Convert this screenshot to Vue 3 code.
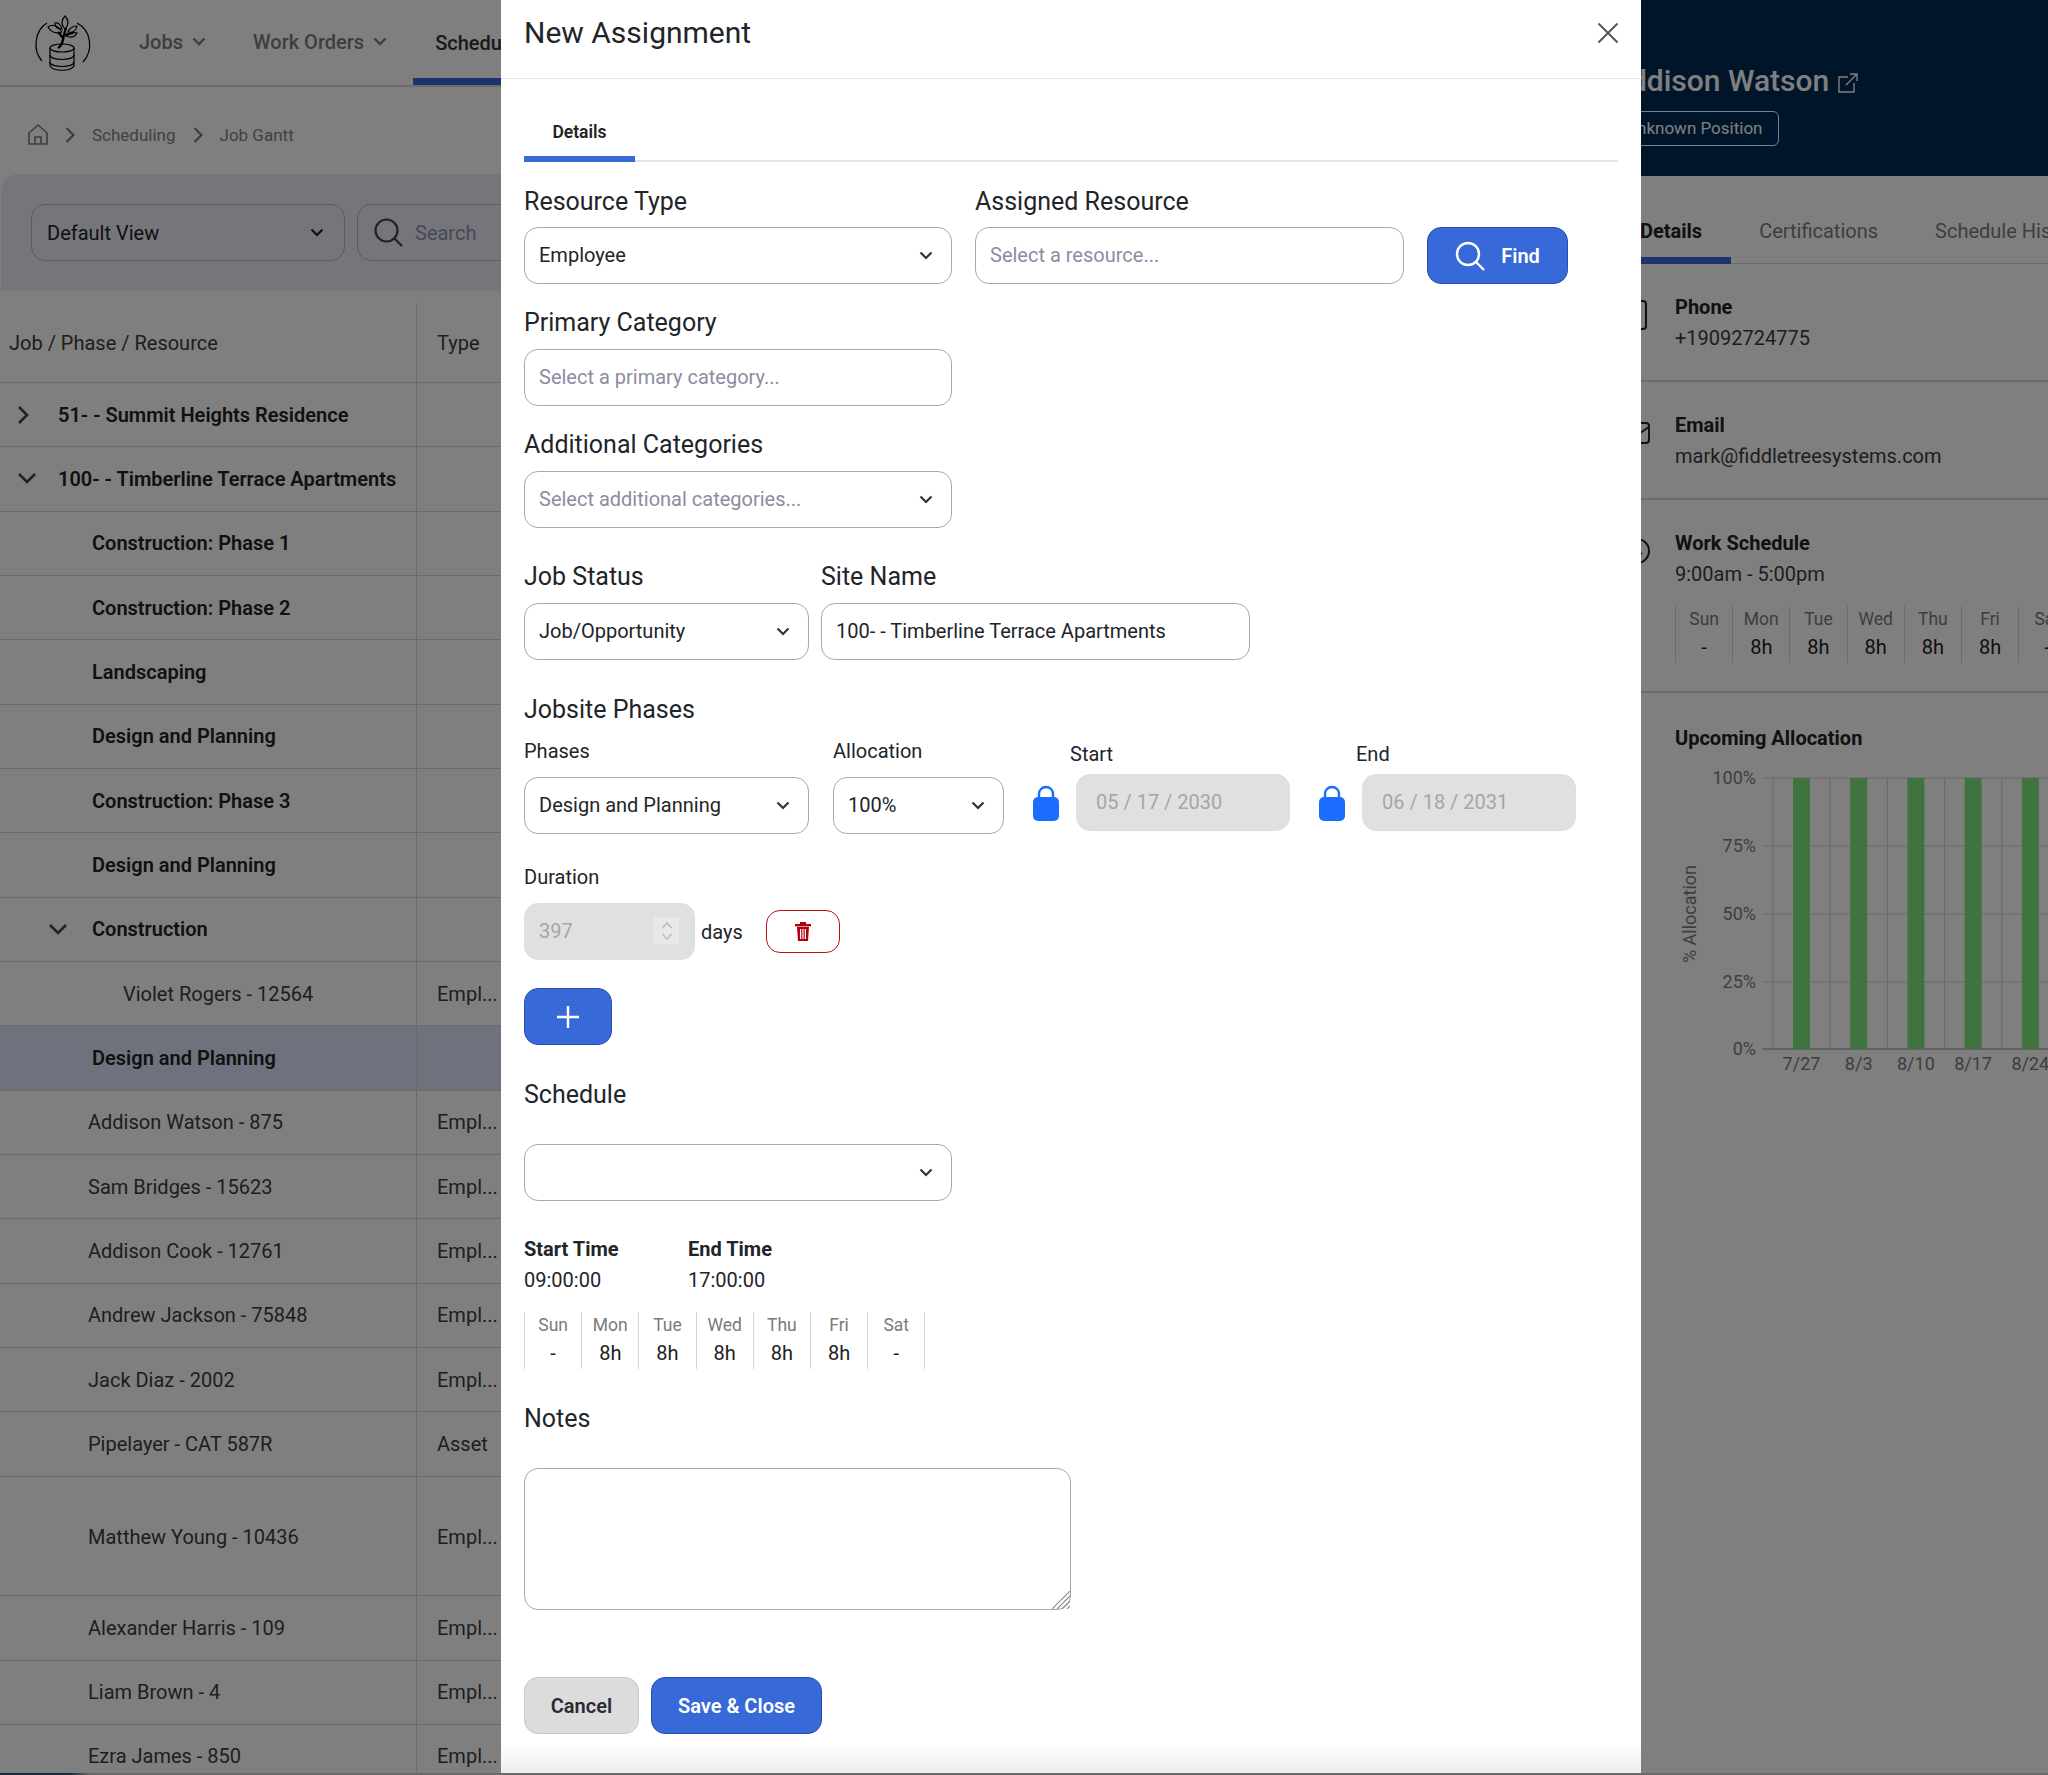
<script setup>
const rows = [
    { name: "51- - Summit Heights Residence", level: "top", chevron: "right" },
    { name: "100- - Timberline Terrace Apartments", level: "top", chevron: "down" },
    { name: "Construction: Phase 1", level: "phase" },
    { name: "Construction: Phase 2", level: "phase" },
    { name: "Landscaping", level: "phase" },
    { name: "Design and Planning", level: "phase" },
    { name: "Construction: Phase 3", level: "phase" },
    { name: "Design and Planning", level: "phase" },
    { name: "Construction", level: "phase", chevron: "sub" },
    { name: "Violet Rogers - 12564", level: "nested", type: "Empl..." },
    { name: "Design and Planning", level: "phase", selected: true },
    { name: "Addison Watson - 875", level: "person", type: "Empl..." },
    { name: "Sam Bridges - 15623", level: "person", type: "Empl..." },
    { name: "Addison Cook - 12761", level: "person", type: "Empl..." },
    { name: "Andrew Jackson - 75848", level: "person", type: "Empl..." },
    { name: "Jack Diaz - 2002", level: "person", type: "Empl..." },
    { name: "Pipelayer - CAT 587R", level: "person", type: "Asset" },
    { name: "Matthew Young - 10436", level: "person", type: "Empl...", tall: true },
    { name: "Alexander Harris - 109", level: "person", type: "Empl..." },
    { name: "Liam Brown - 4", level: "person", type: "Empl..." },
    { name: "Ezra James - 850", level: "person", type: "Empl..." },
];

const days = [
    { day: "Sun", hours: "-" },
    { day: "Mon", hours: "8h" },
    { day: "Tue", hours: "8h" },
    { day: "Wed", hours: "8h" },
    { day: "Thu", hours: "8h" },
    { day: "Fri", hours: "8h" },
    { day: "Sat", hours: "-" },
];

const yTicks = [
    { label: "100%", y: 18 },
    { label: "75%", y: 86 },
    { label: "50%", y: 154 },
    { label: "25%", y: 222 },
    { label: "0%", y: 289 },
];
const xTicks = ["7/27", "8/3", "8/10", "8/17", "8/24"];
</script>

<template>
    <div class="page">
        <div class="left">
            <nav class="nav">
                <svg class="logo" width="60" height="60" viewBox="8 5 60 60" fill="none" stroke="#000" stroke-width="1.2">
                    <path d="M22 15C10 22 7 42 17 53" />
                    <path d="M52 15C66 22 69 42 58 54" />
                    <ellipse cx="37" cy="40" rx="12" ry="4" />
                    <path d="M25 40V57C25 64 49 64 49 57V40" />
                    <path d="M25 47C25 53 49 53 49 47" />
                    <path d="M25 54C25 60 49 60 49 54" />
                    <path d="M33 40C37 38 38 33 39 27L41 20M38 30L33 24M40 27L48 25" stroke-width="2.2" />
                    <path d="M40 8C36 12 36 17 40 21C44 17 44 12 40 8Z" />
                    <path d="M23 19C27 16 33 17 37 24C31 26 26 24 23 19Z" />
                    <path d="M43 24C45 19 50 18 52 18C51 23 48 25 43 24Z" />
                    <path d="M41 28C44 25 48 24 52 25C50 29 46 30 41 28Z" />
                    <path d="M30 15C33 14 36 17 37 21C33 21 30 19 30 15Z" />
                </svg>
                <div class="nav-item">Jobs
                    <svg width="14" height="9" viewBox="0 0 14 9" fill="none" stroke="#7c7c7c" stroke-width="2.4"><path d="M1.5 1.5L7 7L12.5 1.5" /></svg>
                </div>
                <div class="nav-item">Work Orders
                    <svg width="14" height="9" viewBox="0 0 14 9" fill="none" stroke="#7c7c7c" stroke-width="2.4"><path d="M1.5 1.5L7 7L12.5 1.5" /></svg>
                </div>
                <div class="nav-item active">Scheduling</div>
            </nav>

            <div class="crumbs">
                <svg width="20" height="21" viewBox="0 0 20 21" fill="none" stroke="#7c7c7c" stroke-width="1.6">
                    <path d="M1 9L10 1L19 9V20H1Z" stroke-linejoin="round" />
                    <path d="M7 20V13H13V20" />
                </svg>
                <svg class="crumb-chev" width="10" height="16" viewBox="0 0 10 16" fill="none" stroke="#7c7c7c" stroke-width="2.2"><path d="M1.5 1L8.5 8L1.5 15" /></svg>
                <span>Scheduling</span>
                <svg class="crumb-chev" width="10" height="16" viewBox="0 0 10 16" fill="none" stroke="#7c7c7c" stroke-width="2.2"><path d="M1.5 1L8.5 8L1.5 15" /></svg>
                <span>Job Gantt</span>
            </div>

            <div class="filters">
                <div class="view-select">
                    <span>Default View</span>
                    <svg width="14" height="9" viewBox="0 0 14 9" fill="none" stroke="#222" stroke-width="2.2"><path d="M1.5 1.5L7 7L12.5 1.5" /></svg>
                </div>
                <div class="search">
                    <svg width="29" height="29" viewBox="0 0 29 29" fill="none" stroke="#444" stroke-width="2.2">
                        <circle cx="12.5" cy="12.5" r="11" />
                        <path d="M20.5 20.5L28 28" />
                    </svg>
                    <span>Search</span>
                </div>
            </div>

            <div class="table">
                <div class="row head">
                    <div class="name-cell">Job / Phase / Resource</div>
                    <div class="type-cell">Type</div>
                </div>
                <div
                    v-for="(row, i) in rows"
                    :key="i"
                    class="row"
                    :class="{ selected: row.selected, tall: row.tall }"
                >
                    <div class="name-cell" :class="row.level">
                        <svg v-if="row.chevron == 'right'" class="tree-chev" width="13" height="20" viewBox="0 0 13 20" fill="none" stroke="#444" stroke-width="2.6"><path d="M2 2L10 10L2 18" /></svg>
                        <svg v-if="row.chevron == 'down'" class="tree-chev" width="20" height="13" viewBox="0 0 20 13" fill="none" stroke="#444" stroke-width="2.6"><path d="M2 2L10 10L18 2" /></svg>
                        <svg v-if="row.chevron == 'sub'" class="tree-chev sub" width="20" height="13" viewBox="0 0 20 13" fill="none" stroke="#444" stroke-width="2.6"><path d="M2 2L10 10L18 2" /></svg>
                        {{ row.name }}
                    </div>
                    <div class="type-cell">{{ row.type }}</div>
                </div>
            </div>
        </div>

        <aside class="right">
            <header class="person-head">
                <div class="person-name">
                    Addison Watson
                    <svg width="20" height="20" viewBox="0 0 20 20" fill="none" stroke="#fff" stroke-width="1.4">
                        <path d="M10 4H1V19H16V10" />
                        <path d="M8 12L19 1M12 1H19V8" />
                    </svg>
                </div>
                <div class="badge">Unknown Position</div>
            </header>
            <div class="person-tabs">
                <div class="person-tab active">Details</div>
                <div class="person-tab">Certifications</div>
                <div class="person-tab">Schedule History</div>
            </div>
            <section class="info">
                <svg class="info-icon" width="25" height="30" viewBox="0 0 25 30" fill="none" stroke="#222" stroke-width="2"><rect x="4" y="1" width="17" height="28" rx="3" /></svg>
                <div>
                    <div class="info-title">Phone</div>
                    <div class="info-value">+19092724775</div>
                </div>
            </section>
            <section class="info">
                <svg class="info-icon" width="25" height="30" viewBox="0 0 25 30" fill="none" stroke="#222" stroke-width="2"><rect x="1" y="5" width="23" height="20" rx="3" /><path d="M1 9L12 17L24 9" /></svg>
                <div>
                    <div class="info-title">Email</div>
                    <div class="info-value">mark@fiddletreesystems.com</div>
                </div>
            </section>
            <section class="info schedule">
                <svg class="info-icon" width="25" height="30" viewBox="0 0 25 30" fill="none" stroke="#222" stroke-width="2"><circle cx="12" cy="15" r="12" /><path d="M12 8V15L17 18" /></svg>
                <div>
                    <div class="info-title">Work Schedule</div>
                    <div class="info-value">9:00am - 5:00pm</div>
                    <div class="days panel-days">
                        <div v-for="d in days" :key="d.day" class="day">
                            <div class="day-name">{{ d.day }}</div>
                            <div class="day-hours">{{ d.hours }}</div>
                        </div>
                    </div>
                </div>
            </section>
            <div class="chart-title">Upcoming Allocation</div>
            <svg class="chart" width="408" height="320" font-family="Roboto, sans-serif" font-size="18">
                <g stroke="#d2d2d2" stroke-width="1">
                    <line v-for="t in yTicks" :key="t.label" x1="122" :x2="408" :y1="t.y" :y2="t.y" />
                    <line v-for="n in 5" :key="n" :x1="133 + (n - 1) * 57.2" :x2="133 + (n - 1) * 57.2" y1="18" y2="289" />
                </g>
                <line x1="122" x2="408" y1="289" y2="289" stroke="#bbb" stroke-width="1.5" />
                <rect v-for="n in 5" :key="n" :x="153 + (n - 1) * 57.2" y="18" width="17" height="271" fill="#7ee882" />
                <text v-for="t in yTicks" :key="t.label" x="116" :y="t.y + 6" text-anchor="end" fill="#7c7c7c">{{ t.label }}</text>
                <text v-for="(t, n) in xTicks" :key="t" :x="161.5 + n * 57.2" y="310" text-anchor="middle" fill="#7c7c7c">{{ t }}</text>
                <text transform="translate(56 154) rotate(-90)" text-anchor="middle" fill="#7c7c7c">% Allocation</text>
            </svg>
        </aside>

        <div class="overlay"></div>

        <div class="dialog">
            <header class="dialog-head">
                <h2>New Assignment</h2>
                <svg width="22" height="22" viewBox="0 0 22 22" fill="none" stroke="#555" stroke-width="2"><path d="M1.5 1.5L20.5 20.5M20.5 1.5L1.5 20.5" /></svg>
            </header>

            <div class="dialog-body">
                <div class="tabs"><div class="tab">Details</div></div>

                <div class="form-row first">
                    <div class="group">
                        <div class="group-label">Resource Type</div>
                        <div class="control w-428">
                            <span>Employee</span>
                            <svg width="14" height="9" viewBox="0 0 14 9" fill="none" stroke="#333" stroke-width="2.2"><path d="M1.5 1.5L7 7L12.5 1.5" /></svg>
                        </div>
                    </div>
                    <div class="group">
                        <div class="group-label">Assigned Resource</div>
                        <input class="control w-429" placeholder="Select a resource..." />
                    </div>
                    <button class="btn blue find">
                        <svg width="30" height="30" viewBox="0 0 30 30" fill="none" stroke="#fff" stroke-width="2.4">
                            <circle cx="13" cy="13" r="11" />
                            <path d="M21 21L29 29" />
                        </svg>
                        Find
                    </button>
                </div>

                <div class="group spaced">
                    <div class="group-label">Primary Category</div>
                    <input class="control w-428" placeholder="Select a primary category..." />
                </div>

                <div class="group spaced">
                    <div class="group-label">Additional Categories</div>
                    <div class="control w-428 muted">
                        <span>Select additional categories...</span>
                        <svg width="14" height="9" viewBox="0 0 14 9" fill="none" stroke="#333" stroke-width="2.2"><path d="M1.5 1.5L7 7L12.5 1.5" /></svg>
                    </div>
                </div>

                <div class="form-row status">
                    <div class="group">
                        <div class="group-label">Job Status</div>
                        <div class="control w-285">
                            <span>Job/Opportunity</span>
                            <svg width="14" height="9" viewBox="0 0 14 9" fill="none" stroke="#333" stroke-width="2.2"><path d="M1.5 1.5L7 7L12.5 1.5" /></svg>
                        </div>
                    </div>
                    <div class="group">
                        <div class="group-label">Site Name</div>
                        <input class="control w-429" value="100- - Timberline Terrace Apartments" />
                    </div>
                </div>

                <div class="group-label phases-title">Jobsite Phases</div>
                <div class="phase-row">
                    <div class="phase-col">
                        <div class="small-label">Phases</div>
                        <div class="control w-285">
                            <span>Design and Planning</span>
                            <svg width="14" height="9" viewBox="0 0 14 9" fill="none" stroke="#333" stroke-width="2.2"><path d="M1.5 1.5L7 7L12.5 1.5" /></svg>
                        </div>
                    </div>
                    <div class="phase-col alloc">
                        <div class="small-label">Allocation</div>
                        <div class="control w-170">
                            <span>100%</span>
                            <svg width="14" height="9" viewBox="0 0 14 9" fill="none" stroke="#333" stroke-width="2.2"><path d="M1.5 1.5L7 7L12.5 1.5" /></svg>
                        </div>
                    </div>
                    <div class="date-col">
                        <div class="small-label date-label">Start</div>
                        <svg class="lock" width="26" height="36" viewBox="0 0 26 36" fill="#1a6dff">
                            <path d="M6 15V9C6 5 9 2 13 2C17 2 20 5 20 9V15" fill="none" stroke="#1a6dff" stroke-width="2.4" />
                            <rect y="12" width="26" height="24" rx="5" />
                        </svg>
                        <div class="control disabled w-214">05 / 17 / 2030</div>
                    </div>
                    <div class="date-col">
                        <div class="small-label date-label">End</div>
                        <svg class="lock" width="26" height="36" viewBox="0 0 26 36" fill="#1a6dff">
                            <path d="M6 15V9C6 5 9 2 13 2C17 2 20 5 20 9V15" fill="none" stroke="#1a6dff" stroke-width="2.4" />
                            <rect y="12" width="26" height="24" rx="5" />
                        </svg>
                        <div class="control disabled w-214">06 / 18 / 2031</div>
                    </div>
                </div>

                <div class="small-label duration-label">Duration</div>
                <div class="duration-row">
                    <div class="control disabled number">
                        <span>397</span>
                        <span class="spinner">
                            <svg width="12" height="24" viewBox="0 0 12 24" fill="none" stroke="#bcbcc4" stroke-width="1.6"><path d="M1.5 9L6 4L10.5 9M1.5 15L6 20L10.5 15" /></svg>
                        </span>
                    </div>
                    <span class="days-text">days</span>
                    <button class="trash">
                        <svg width="16" height="19" viewBox="0 0 16 19" fill="#b00010">
                            <rect x="0" y="2" width="16" height="2.4" />
                            <rect x="5" y="0" width="6" height="3" />
                            <path d="M2 5H14L13 19H3ZM5 7V17H6.2V7ZM7.4 7V17H8.6V7ZM9.8 7V17H11V7Z" fill-rule="evenodd" />
                        </svg>
                    </button>
                </div>

                <button class="btn blue plus">
                    <svg width="24" height="24" viewBox="0 0 24 24" stroke="#fff" stroke-width="2.4"><path d="M12 1V23M1 12H23" /></svg>
                </button>

                <div class="group-label schedule-title">Schedule</div>
                <div class="control w-428 schedule-select">
                    <span></span>
                    <svg width="14" height="9" viewBox="0 0 14 9" fill="none" stroke="#333" stroke-width="2.2"><path d="M1.5 1.5L7 7L12.5 1.5" /></svg>
                </div>

                <div class="times">
                    <div class="time-col">
                        <div class="time-title">Start Time</div>
                        <div class="time-value">09:00:00</div>
                    </div>
                    <div class="time-col">
                        <div class="time-title">End Time</div>
                        <div class="time-value">17:00:00</div>
                    </div>
                </div>

                <div class="days form-days">
                    <div v-for="d in days" :key="d.day" class="day">
                        <div class="day-name">{{ d.day }}</div>
                        <div class="day-hours">{{ d.hours }}</div>
                    </div>
                </div>

                <div class="group-label notes-title">Notes</div>
                <div class="notes-wrap">
                    <textarea class="notes"></textarea>
                    <svg class="grip" width="18" height="18" viewBox="0 0 18 18" fill="none" stroke="#8a8a8a" stroke-width="1.1">
                        <path d="M0 18L18 0M5 18L18 5M10 18L18 10M15 18L18 15" />
                    </svg>
                </div>

                <div class="actions">
                    <button class="btn cancel">Cancel</button>
                    <button class="btn blue save">Save &amp; Close</button>
                </div>
            </div>
        </div>
        <div class="page-edge"></div>
    </div>
</template>

<style>
html,
body {
    margin: 0;
    background: #fff;
}
</style>

<style scoped>
.page {
    position: relative;
    width: 2048px;
    height: 1775px;
    overflow: hidden;
    display: flex;
    justify-content: space-between;
    background: #fff;
    font-family: Roboto, "Liberation Sans", sans-serif;
    font-size: 20px;
    color: #212529;
}
.left {
    width: 560px;
    flex: none;
    overflow: hidden;
}
.nav {
    height: 85px;
    display: flex;
    align-items: center;
    border-bottom: 2px solid #d8d8d8;
    padding-left: 33px;
    white-space: nowrap;
}
.logo {
    flex: none;
    margin-right: 46px;
}
.nav-item {
    display: flex;
    align-items: center;
    gap: 9px;
    font-weight: 500;
    color: #7c7c7c;
    margin-right: 47px;
    height: 85px;
    margin-top: -2px;
}
.nav-item.active {
    color: #333;
    margin-left: -21px;
    padding: 7px 22px 0;
    box-sizing: border-box;
    border-bottom: 7px solid #3869d9;
    height: 84px;
    margin-top: 0;
}
.crumbs {
    height: 87px;
    box-sizing: border-box;
    padding: 8px 0 0 28px;
    display: flex;
    align-items: center;
    font-size: 17px;
    color: #828282;
}
.crumb-chev {
    margin: 0 17px 0 17px;
}
.filters {
    margin-left: 1px;
    height: 117px;
    box-sizing: border-box;
    padding: 30px 0 0 30px;
    display: flex;
    gap: 12px;
    background: #e9ecf6;
    border-top-left-radius: 18px;
}
.view-select,
.search {
    height: 57px;
    box-sizing: border-box;
    border: 1.5px solid #b8b8b8;
    border-radius: 14px;
    display: flex;
    align-items: center;
}
.view-select {
    width: 314px;
    flex: none;
    justify-content: space-between;
    padding: 0 20px 0 15px;
    color: #222;
}
.search {
    width: 300px;
    flex: none;
    padding-left: 16px;
    gap: 12px;
    color: #9090a8;
}
.table {
    margin-top: 12px;
}
.row {
    display: flex;
    height: 64.33px;
    box-sizing: border-box;
    border-bottom: 1.5px solid #d6d6d6;
    white-space: nowrap;
}
.row.head {
    height: 80px;
    color: #333;
}
.row.tall {
    height: 119.6px;
}
.row.tall .name-cell,
.row.tall .type-cell {
    padding-top: 3px;
}
.row.selected {
    background: #dbe5f8;
}
.name-cell {
    position: relative;
    width: 417px;
    flex: none;
    box-sizing: border-box;
    display: flex;
    align-items: center;
    border-right: 1.5px solid #d6d6d6;
    padding-left: 9px;
    color: #3c3c3c;
}
.name-cell.top {
    padding-left: 58px;
    font-weight: 600;
    color: #222;
}
.name-cell.phase {
    padding-left: 92px;
    font-weight: 600;
    color: #222;
}
.name-cell.nested {
    padding-left: 123px;
}
.name-cell.person {
    padding-left: 88px;
}
.tree-chev {
    position: absolute;
    left: 17px;
}
.tree-chev.sub {
    left: 48px;
}
.type-cell {
    padding-left: 20px;
    display: flex;
    align-items: center;
    color: #3c3c3c;
}
.right {
    width: 488px;
    flex: none;
    overflow: hidden;
    white-space: nowrap;
}
.person-head {
    height: 176px;
    box-sizing: border-box;
    background: #002a52;
    color: #fff;
    padding: 63px 0 0 50px;
}
.person-name {
    display: flex;
    align-items: center;
    gap: 9px;
    font-size: 30px;
    font-weight: 500;
    line-height: 36px;
}
.person-name svg {
    margin-top: 4px;
}
.badge {
    display: inline-block;
    margin-top: 12px;
    height: 35px;
    line-height: 33px;
    box-sizing: border-box;
    padding: 0 15px;
    border: 1px solid #fff;
    border-radius: 6px;
    font-size: 17px;
    color: #fff;
}
.person-tabs {
    display: flex;
    height: 88px;
    box-sizing: border-box;
    padding-left: 51px;
    border-bottom: 1.5px solid #d6d6d6;
}
.person-tab {
    padding: 29px 29px 0;
    display: flex;
    align-items: center;
    height: 88px;
    box-sizing: border-box;
    color: #7c7c7c;
    border-bottom: 7px solid transparent;
}
.person-tab + .person-tab {
    margin-left: -1px;
}
.person-tab.active {
    font-weight: 700;
    color: #222;
    border-bottom-color: #3869d9;
}
.info {
    height: 118px;
    box-sizing: border-box;
    display: flex;
    padding: 30px 0 0 65px;
    border-bottom: 2px solid #d6d6d6;
}
.info.schedule {
    height: 193px;
}
.info-icon {
    flex: none;
    margin-right: 25px;
    margin-top: 6px;
}
.info-title {
    font-weight: 700;
    line-height: 26px;
    color: #222;
}
.info-value {
    line-height: 34px;
    margin-top: 1px;
    color: #3c3c3c;
}
.days {
    display: flex;
    border-right: 1.5px solid #d6d6d6;
    width: max-content;
}
.day {
    width: 57.2px;
    box-sizing: border-box;
    height: 57px;
    border-left: 1.5px solid #d6d6d6;
    text-align: center;
}
.day-name {
    font-size: 17.5px;
    line-height: 26px;
    color: #7a7a7a;
}
.day-hours {
    line-height: 31px;
    color: #222;
}
.panel-days {
    margin-top: 15px;
}
.chart-title {
    margin: 33px 0 0 115px;
    font-weight: 700;
    line-height: 24px;
    color: #222;
}
.chart {
    display: block;
    margin: 10px 0 0 80px;
}
.overlay {
    position: absolute;
    inset: 0;
    background: rgba(0, 0, 0, 0.5);
}
.page-edge {
    position: absolute;
    left: 0;
    right: 0;
    bottom: 0;
    height: 2px;
    background: linear-gradient(90deg, #1c2a38 0, #1c2a38 70px, #6a6a6a 90px);
}
.dialog {
    position: absolute;
    left: 501px;
    top: 0;
    width: 1140px;
    height: 1773px;
    overflow: hidden;
    background: #fff;
}
.dialog::after {
    content: "";
    position: absolute;
    left: 0;
    right: 0;
    bottom: 0;
    height: 30px;
    background: linear-gradient(rgba(240, 240, 240, 0), #ededed);
}
.dialog-head {
    height: 79px;
    box-sizing: border-box;
    border-bottom: 1px solid #e2e6ea;
    padding: 0 22px 0 23px;
    display: flex;
    justify-content: space-between;
}
.dialog-head h2 {
    margin: 14px 0 0;
    font-size: 30px;
    line-height: 38px;
    font-weight: 400;
    color: #212529;
}
.dialog-head svg {
    margin: 22px 0 0;
}
.dialog-body {
    padding: 0 23px;
}
.tabs {
    height: 83px;
    box-sizing: border-box;
    border-bottom: 2px solid #e4e4e4;
}
.tab {
    width: 111px;
    height: 83px;
    box-sizing: border-box;
    padding-top: 42px;
    text-align: center;
    font-size: 17.5px;
    line-height: 22px;
    font-weight: 600;
    color: #222;
    border-bottom: 6px solid #3869d9;
}
.form-row {
    display: flex;
    gap: 23px;
}
.form-row.first {
    margin-top: 25px;
    align-items: flex-end;
}
.group-label {
    font-size: 25px;
    line-height: 30px;
    margin-bottom: 11px;
    color: #212529;
}
.form-row.first .group-label {
    margin-bottom: 10px;
}
.spaced {
    margin-top: 24px;
}
.control {
    height: 57px;
    box-sizing: border-box;
    border: 1.5px solid #a8a8a8;
    border-radius: 14px;
    padding: 0 14px 2px;
    display: flex;
    align-items: center;
    justify-content: space-between;
    background: #fff;
    font-family: Roboto, "Liberation Sans", sans-serif;
    font-size: 20px;
    color: #212529;
    outline: none;
}
.control::placeholder {
    color: #8c8ca2;
    opacity: 1;
}
.control.muted {
    color: #8c8ca2;
}
.control svg {
    margin-right: 4px;
    margin-top: 2px;
    flex: none;
}
.w-428 {
    width: 428px;
}
.w-429 {
    width: 429px;
}
.w-285 {
    width: 285px;
}
.w-170 {
    width: 171px;
}
.w-214 {
    width: 214px;
}
.control.disabled {
    border-color: #dedede;
    background: #e0e0e0;
    color: #a6a6a6;
    padding-left: 19px;
    justify-content: flex-start;
}
.control.number {
    width: 171px;
    padding-left: 14px;
    padding-right: 15px;
    justify-content: space-between;
}
.find {
    width: 141px;
    height: 57px;
    gap: 16px;
}
.btn {
    display: flex;
    align-items: center;
    justify-content: center;
    box-sizing: border-box;
    border-radius: 14px;
    font-family: Roboto, "Liberation Sans", sans-serif;
    font-size: 20px;
    font-weight: 600;
    padding: 0;
}
.blue {
    background: #3869d9;
    border: 1.5px solid #2a4fa8;
    color: #fff;
}
.form-row.status {
    margin-top: 34px;
    gap: 12px;
}
.phases-title {
    margin: 35px 0 14px;
}
.phase-row {
    display: flex;
}
.small-label {
    font-size: 20px;
    line-height: 24px;
    color: #212529;
}
.phase-col .small-label {
    margin-bottom: 14px;
}
.phase-col.alloc {
    margin-left: 24px;
}
.date-col {
    margin: 3px 0 0 29px;
    display: grid;
    grid-template-columns: 26px 214px;
    grid-template-rows: 24px 57px;
    column-gap: 17px;
    row-gap: 8px;
    align-items: center;
}
.date-label {
    grid-column: 2;
    margin-left: -6px;
}
.lock {
    grid-row: 2;
}
.duration-label {
    margin-top: 31px;
    margin-bottom: 14px;
}
.duration-row {
    display: flex;
    align-items: center;
}
.spinner {
    width: 25px;
    height: 27px;
    background: #e8e8ea;
    display: flex;
    align-items: center;
    justify-content: center;
}
.control .spinner svg {
    margin: 0;
}
.days-text {
    margin-left: 6px;
}
.trash {
    margin-left: 23px;
    width: 74px;
    height: 43px;
    background: #fff;
    border: 1.8px solid #c00d1b;
    border-radius: 14px;
    display: flex;
    align-items: center;
    justify-content: center;
    padding: 0;
}
.plus {
    margin-top: 28px;
    width: 88px;
    height: 57px;
}
.schedule-title {
    margin: 35px 0 34px;
}
.times {
    margin-top: 37px;
    display: flex;
}
.time-col {
    width: 164px;
}
.time-title {
    font-weight: 700;
    line-height: 22px;
    color: #212529;
}
.time-value {
    margin-top: 9px;
    line-height: 22px;
}
.form-days {
    margin-top: 21px;
}
.notes-title {
    margin: 35px 0 34px;
}
.notes-wrap {
    position: relative;
    width: 547px;
    height: 142px;
}
.notes {
    display: block;
    width: 547px;
    height: 142px;
    box-sizing: border-box;
    border: 1.5px solid #a8a8a8;
    border-radius: 14px;
    outline: none;
    background: #fff;
    resize: none;
}
.grip {
    position: absolute;
    right: 1px;
    bottom: 1px;
}
.actions {
    margin-top: 67px;
    display: flex;
    gap: 12px;
}
.cancel {
    width: 115px;
    height: 57px;
    background: #dcdcdc;
    border: 1.5px solid #c8c8c8;
    color: #2a2a35;
}
.save {
    width: 171px;
    height: 57px;
}
</style>
